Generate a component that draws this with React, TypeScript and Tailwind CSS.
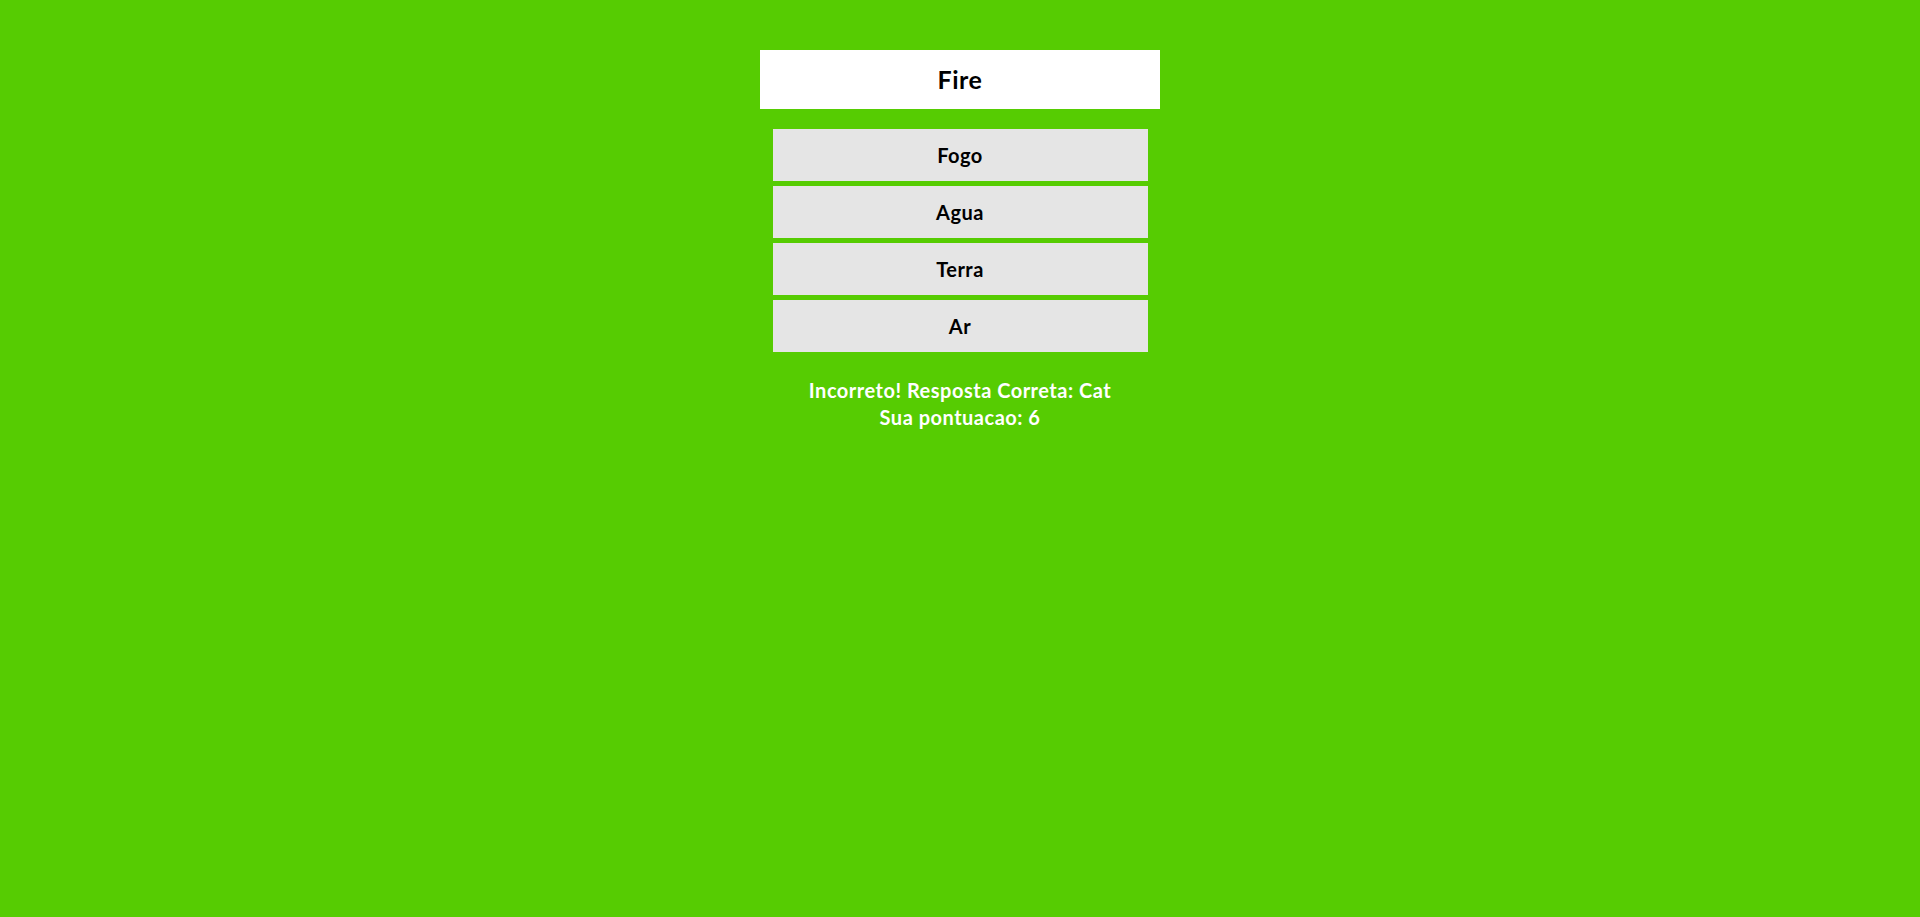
import React from 'react';

const options = ['Fogo', 'Agua', 'Terra', 'Ar'];

export default function App() {
  return (
    <div
      className="min-h-[917px] w-full bg-[#56cc02] flex flex-col items-center pt-[50px]"
      style={{ fontFamily: 'Lato, "Open Sans", sans-serif' }}
    >
      <div className="w-[400px] h-[59px] bg-white flex items-center justify-center text-[25px] font-bold text-black tracking-[0.5px]">
        Fire
      </div>

      <div className="mt-[20px] flex flex-col gap-[5px]">
        {options.map((opt) => (
          <button
            key={opt}
            className="w-[375px] h-[52px] bg-[#e5e5e5] flex items-center justify-center text-[20px] font-bold text-black tracking-[0.5px]"
          >
            {opt}
          </button>
        ))}
      </div>

      <div className="mt-[25px] text-center text-white font-bold text-[20px] leading-[27px] tracking-[0.5px]">
        <p>Incorreto! Resposta Correta: Cat</p>
        <p>Sua pontuacao: 6</p>
      </div>
    </div>
  );
}
